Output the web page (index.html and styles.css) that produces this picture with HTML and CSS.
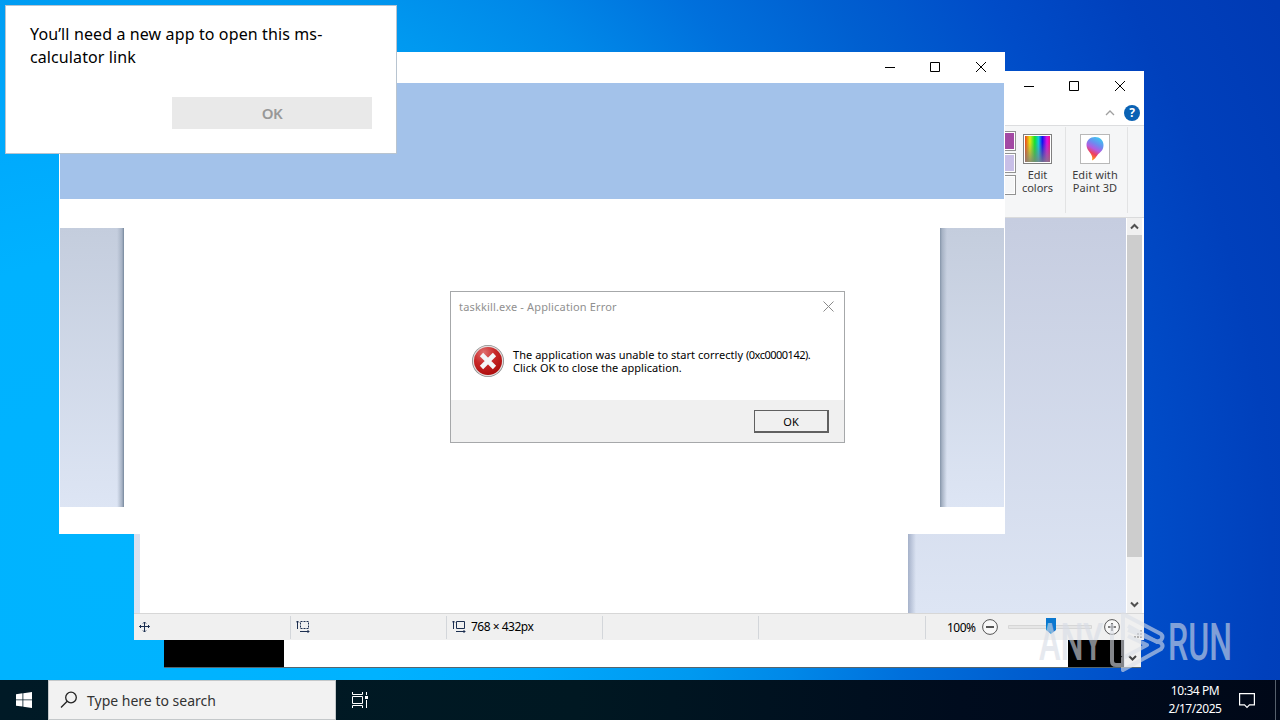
FILE: index.html
```
<!DOCTYPE html>
<html lang="en">
<head>
    <meta charset="UTF-8">
    <meta name="viewport" content="width=device-width, initial-scale=1.0">
    <title>Desktop</title>
    <link rel="stylesheet" href="styles.css">
</head>
<body>
    <div class="desktop">
        <!-- console -->
        <div class="window console">
            <div class="console-body">
                <div class="console-page"></div>
            </div>
            <div class="console-scroll">
                <svg width="9" height="7" viewBox="0 0 9 7"><path d="M1 1l3.5 3.5L8 1" fill="none" stroke="#444" stroke-width="2"/></svg>
            </div>
        </div>

        <!-- paint -->
        <div class="window paint">
            <div class="titlebar">
                <svg class="controls" width="104" height="12" viewBox="0 0 104 12" fill="none" stroke="#000">
                    <path d="M0 6.5h10M45.5 1.5h9v9h-9zM91 1l10 10M101 1L91 11"/>
                </svg>
            </div>
            <div class="tabs">
                <svg width="10" height="6" viewBox="0 0 10 6"><path d="M1 5l4-4 4 4" fill="none" stroke="#a0a0a0" stroke-width="1.3"/></svg>
                <span class="help">?</span>
            </div>
            <div class="ribbon">
                <div class="swatches">
                    <span class="swatch purple"></span>
                    <span class="swatch lavender"></span>
                    <span class="swatch"></span>
                </div>
                <div class="tool edit-colors">
                    <span class="spectrum"></span>
                    <span>Edit<br>colors</span>
                </div>
                <div class="tool paint3d">
                    <span class="paint3d-icon">
                        <svg width="20" height="26" viewBox="0 0 20 26">
                            <defs>
                                <linearGradient id="drop" x1="0.7" y1="0" x2="0.3" y2="1">
                                    <stop offset="0" stop-color="#3cc8f0"/>
                                    <stop offset="0.3" stop-color="#6b8df0"/>
                                    <stop offset="0.52" stop-color="#b45be0"/>
                                    <stop offset="0.72" stop-color="#f0405c"/>
                                    <stop offset="0.95" stop-color="#ff9a10"/>
                                </linearGradient>
                            </defs>
                            <path d="M10 1c5 0 8.500 3.500 8.500 8 0 6-4 7.500-6 10-1.500 2-3 4.500-5.500 5.500C8 21 6.500 18.500 4.500 16 3 14 1.500 12 1.500 9 1.500 4.500 5 1 10 1z" fill="url(#drop)"/>
                        </svg>
                    </span>
                    <span>Edit with<br>Paint 3D</span>
                </div>
            </div>
            <div class="workspace">
                <div class="gutter"></div>
                <div class="canvas"></div>
                <div class="backdrop"></div>
                <div class="scrollbar">
                    <span class="arrow"><svg width="9" height="7" viewBox="0 0 9 7"><path d="M1 5.500L4.500 2 8 5.500" fill="none" stroke="#505050" stroke-width="2"/></svg></span>
                    <span class="thumb"></span>
                    <span class="arrow down"><svg width="9" height="7" viewBox="0 0 9 7"><path d="M1 1.500L4.500 5 8 1.500" fill="none" stroke="#505050" stroke-width="2"/></svg></span>
                </div>
            </div>
            <div class="statusbar">
                <div class="cell">
                    <svg width="12" height="12" viewBox="0 0 12 12" fill="none" stroke="#1c2f50"><path d="M5.500 1v10M0.500 5.500h10M4 2.500L5.500 1 7 2.500M4 9.500L5.500 11 7 9.500M2 4L0.500 5.500 2 7M9 4l1.500 1.500L9 7"/></svg>
                </div>
                <div class="cell">
                    <svg width="14" height="13" viewBox="0 0 14 13" fill="none" stroke="#1c2f50"><path d="M1.500 9V1M0 2.500L1.500 1 3 2.500M4 11.500h9M11.500 10l1.500 1.500-1.500 1.500"/><path d="M4.500 1.500h8v7h-8z" stroke-dasharray="2 1"/></svg>
                </div>
                <div class="cell">
                    <svg width="14" height="13" viewBox="0 0 14 13" fill="none" stroke="#1c2f50"><path d="M1.500 9V1M0 2.500L1.500 1 3 2.500M4 11.500h9M11.500 10l1.500 1.500-1.500 1.500M4.500 1.500h8v7h-8z"/></svg>
                    <span class="size">768 × 432px</span>
                </div>
                <div class="cell"></div>
                <div class="cell wide"></div>
                <div class="zoom">
                    <span class="percent">100%</span>
                    <svg width="16" height="16" viewBox="0 0 16 16" fill="#f8f8f8" stroke="#555"><circle cx="8" cy="8" r="7.400"/><path d="M4 8h8" stroke-width="2"/></svg>
                    <svg class="slider" width="84" height="18" viewBox="0 0 84 18">
                        <path d="M0.500 7.500h83v3h-83z" fill="#e6e6e6" stroke="#d6d6d6"/>
                        <path d="M38 0h10v12l-5 4-5-4z" fill="#0a78d0"/>
                    </svg>
                    <svg width="16" height="16" viewBox="0 0 16 16" fill="#f8f8f8" stroke="#555"><circle cx="8" cy="8" r="7.400"/><path d="M4 8h8M8 4v8" stroke-width="1.600"/></svg>
                </div>
                <svg class="grip" width="8" height="8" viewBox="0 0 8 8" fill="#b0b0b0"><path d="M6 0h2v2H6zM3 3h2v2H3zM6 3h2v2H6zM0 6h2v2H0zM3 6h2v2H3zM6 6h2v2H6z"/></svg>
            </div>
        </div>

        <!-- half drawn window -->
        <div class="window front">
            <div class="titlebar">
                <svg class="controls" width="104" height="12" viewBox="0 0 104 12" fill="none" stroke="#000">
                    <path d="M0 6.500h10M45.500 1.500h9v9h-9zM91 1l10 10M101 1L91 11"/>
                </svg>
            </div>
            <div class="banner"></div>
            <div class="stage">
                <div class="side left"></div>
                <div class="side right"></div>
            </div>
        </div>

        <!-- error dialog -->
        <div class="window error">
            <div class="error-title">
                <span>taskkill.exe - Application Error</span>
                <svg width="11" height="11" viewBox="0 0 11 11"><path d="M0.500 0.500l10 10M10.500 0.500l-10 10" stroke="#8a8a8a"/></svg>
            </div>
            <div class="error-body">
                <svg width="34" height="34" viewBox="0 0 34 34">
                    <defs>
                        <radialGradient id="red" cx="0.35" cy="0.2" r="0.9">
                            <stop offset="0" stop-color="#e07070"/>
                            <stop offset="0.45" stop-color="#c82828"/>
                            <stop offset="1" stop-color="#a80808"/>
                        </radialGradient>
                    </defs>
                    <circle cx="17" cy="17" r="16" fill="#8c8c8c"/>
                    <circle cx="17" cy="17" r="15.200" fill="#e4dcdc"/>
                    <circle cx="17" cy="17" r="14" fill="url(#red)"/>
                    <path d="M10.500 10.500l13 13M23.500 10.500l-13 13" stroke="#f4f6f8" stroke-width="4.600"/>
                </svg>
                <p>The application was unable to start correctly <span class="code">(0xc0000142).</span><br>Click OK to close the application.</p>
            </div>
            <div class="error-footer">
                <button class="error-ok">OK</button>
            </div>
        </div>

        <!-- app picker -->
        <div class="window picker">
            <p>You’ll need a new app to open this ms-<br>calculator link</p>
            <button class="picker-ok">OK</button>
        </div>

        <svg class="watermark" width="220" height="70" viewBox="0 0 220 70">
            <g class="mark-text">
                <text x="3" y="52" textLength="64" lengthAdjust="spacingAndGlyphs">ANY</text>
                <text x="132" y="52" textLength="64" lengthAdjust="spacingAndGlyphs">RUN</text>
            </g>
            <g class="mark-play">
                <path d="M76 16v37q0 4 4 4h7"/>
                <path d="M87 48V6l38 20q3 3 0 6l-4 2L92 18"/>
                <path d="M92 22l33 13q3 3 0 6L87 62V50l24-13-19-9"/>
            </g>
        </svg>
    </div>

    <div class="taskbar">
        <div class="start">
            <svg width="16" height="16" viewBox="0 0 16 16" fill="#fff"><path d="M0 2.200l6.500-.9v6.200H0zM7.300 1.200L16 0v7.500H7.300zM0 8.300h6.500v6.200L0 13.700zM7.300 8.300H16V16l-8.700-1.200z"/></svg>
        </div>
        <div class="search">
            <svg width="18" height="18" viewBox="0 0 18 18" fill="none" stroke="#222" stroke-width="1.300"><circle cx="11" cy="6.500" r="5.300"/><path d="M7.200 10.200L1 16.500"/></svg>
            <span>Type here to search</span>
        </div>
        <div class="taskview">
            <svg width="17" height="16" viewBox="0 0 17 16" fill="none" stroke="#fff"><path d="M0.500 0v2.500h10V0M0.500 4.500h10v7h-10zM0.500 16v-2.500h10V16M14.500 0v3M14.500 8v8"/><path d="M13 4h3v3h-3z" fill="#fff" stroke="none"/></svg>
        </div>
        <div class="clock">
            <span class="time">10:34 PM</span>
            <span class="date">2/17/2025</span>
        </div>
        <div class="notify">
            <svg width="16" height="17" viewBox="0 0 16 17" fill="none" stroke="#fff" stroke-width="1.200"><path d="M0.600 1.600h14.800v11.200H10.500L8 15.300 5.500 12.800H0.600z"/></svg>
        </div>
    </div>
</body>
</html>
```
FILE: styles.css
```
* {
    box-sizing: border-box;
}
body {
    margin: 0;
    width: 1280px;
    height: 720px;
    overflow: hidden;
    display: flex;
    flex-direction: column;
    font-family: "Noto Sans", "Open Sans", sans-serif;
    color: #000;
}
p {
    margin: 0;
}
svg {
    display: block;
    flex: none;
}
button {
    font-family: inherit;
    padding: 0;
    border-radius: 0;
}
.desktop {
    position: relative;
    height: 680px;
    background: radial-gradient(circle at 100px 560px, #00b4ff 0, #00b2ff 300px, #00a8fc 450px, #0099f0 600px, #0088e8 700px, #0070dc 810px, #005fd0 920px, #004cc8 1050px, #0040bc 1170px, #003ab4 1300px);
}
.window {
    position: absolute;
    display: flex;
    background: #fff;
}
.titlebar {
    height: 31px;
    display: flex;
    justify-content: flex-end;
    align-items: center;
    flex: none;
    padding-bottom: 2px;
}
.controls {
    margin-right: 16px;
}

/* console */
.console {
    left: 164px;
    top: 600px;
    width: 977px;
    height: 68px;
    border-bottom: 1px solid #55656d;
}
.console-body {
    width: 960px;
    padding: 0 56px 0 120px;
    background: #000;
}
.console-page {
    height: 100%;
    background: #fff;
}
.console-scroll {
    width: 17px;
    background: #f0f0f0;
    display: flex;
    justify-content: center;
    align-items: flex-end;
    padding-bottom: 5px;
}

/* paint */
.paint {
    left: 134px;
    top: 71px;
    width: 1010px;
    height: 569px;
    flex-direction: column;
}
.tabs {
    height: 24px;
    display: flex;
    justify-content: flex-end;
    align-items: center;
    gap: 9px;
    padding: 0 4px 1px 0;
    border-bottom: 1px solid #dcdddf;
}
.help {
    width: 16px;
    height: 16px;
    border-radius: 50%;
    background: #0a62b4;
    color: #fff;
    font-size: 12px;
    font-weight: bold;
    line-height: 16px;
    text-align: center;
}
.ribbon {
    height: 92px;
    display: flex;
    justify-content: flex-end;
    padding: 1px 16px 4px 0;
    background: #f5f6f7;
    border-bottom: 1px solid #dadbdc;
}
.swatches {
    display: flex;
    flex-direction: column;
    gap: 2px;
    padding-top: 4px;
}
.swatch {
    width: 20px;
    height: 20px;
    border: 1px solid #929292;
    box-shadow: inset 0 0 0 1px #fff;
    background: #f5f6f7;
}
.purple {
    background: #a349a4;
}
.lavender {
    background: #c8bfe7;
}
.tool {
    display: flex;
    flex-direction: column;
    align-items: center;
    font-size: 11px;
    line-height: 13px;
    text-align: center;
    color: #3c3c3c;
    border-right: 1px solid #e2e3e4;
    white-space: nowrap;
}
.edit-colors {
    width: 50px;
    padding-right: 6px;
}
.paint3d {
    width: 62px;
    padding-right: 3px;
    letter-spacing: 0.1px;
}
.spectrum {
    width: 29px;
    height: 30px;
    margin: 7px 0 4px;
    border: 1px solid #808080;
    box-shadow: inset 0 0 0 1px #fff;
    background: linear-gradient(to bottom, rgba(128, 128, 128, 0) 25%, rgba(128, 128, 128, 0.85)), linear-gradient(to right, #e82020, #e8e810 22%, #10e030 40%, #10c8e0 54%, #1010f0 68%, #e010e0 85%, #f01060);
}
.paint3d-icon {
    width: 30px;
    height: 30px;
    margin: 7px 0 4px;
    border: 1px solid #b8b8b8;
    background: #fff;
    display: flex;
    justify-content: center;
    align-items: center;
}
.workspace {
    height: 396px;
    display: flex;
    background: linear-gradient(#c6cde0, #dde5f4);
}
.gutter {
    width: 6px;
}
.canvas {
    width: 768px;
    background: #fff;
}
.backdrop {
    flex: 1;
    background: linear-gradient(to right, rgba(130, 145, 175, 0.6), rgba(130, 145, 175, 0) 8px);
}
.scrollbar {
    width: 18px;
    display: flex;
    flex-direction: column;
    background: #f0f0f0;
    border: solid #fff;
    border-width: 0 2px 0 1px;
}
.arrow {
    height: 17px;
    display: flex;
    justify-content: center;
    align-items: center;
}
.thumb {
    height: 322px;
    background: #cdcdcd;
}
.down {
    margin-top: auto;
}
.statusbar {
    height: 27px;
    display: flex;
    background: #f0f0f0;
    border-top: 1px solid #d7d7d7;
}
.cell {
    width: 156px;
    margin: 2px 0 1px;
    padding: 0 0 2px 5px;
    display: flex;
    align-items: center;
    gap: 5px;
    border-right: 1px solid #d3d6da;
}
.cell:first-child {
    width: 157px;
}
.wide {
    width: 167px;
}
.size,
.percent {
    font-size: 12px;
    letter-spacing: -0.5px;
}
.zoom {
    display: flex;
    align-items: center;
    padding-left: 21px;
}
.percent {
    width: 35px;
}
.slider {
    margin: 0 12px 0 10px;
}
.grip {
    align-self: flex-end;
    margin: 0 2px 2px auto;
}

/* front */
.front {
    left: 59px;
    top: 52px;
    width: 946px;
    height: 482px;
    flex-direction: column;
    padding: 0 1px;
}
.front .controls {
    margin-right: 15px;
}
.banner {
    height: 116px;
    background: #a3c2ea;
}
.stage {
    height: 279px;
    margin-top: 29px;
    display: flex;
    justify-content: space-between;
}
.side {
    width: 64px;
}
.left {
    background: linear-gradient(to left, #76879c 0, #a6b2c4 2px, rgba(166, 178, 196, 0) 7px), linear-gradient(#c4cddd, #dde5f4);
}
.right {
    background: linear-gradient(to right, #8494a8 0, #a6b2c4 2px, rgba(166, 178, 196, 0) 7px), linear-gradient(#c4cddd, #dde5f4);
}

/* error dialog */
.error {
    left: 450px;
    top: 291px;
    width: 395px;
    height: 152px;
    flex-direction: column;
    border: 1px solid #a6a8aa;
    font-size: 11px;
}
.error-title {
    height: 30px;
    display: flex;
    justify-content: space-between;
    align-items: center;
    padding: 0 10px 2px 8px;
    color: #909090;
    letter-spacing: 0.16px;
}
.error-body {
    height: 78px;
    display: flex;
    align-items: center;
    padding-left: 20px;
    gap: 8px;
    line-height: 13px;
    letter-spacing: 0.04px;
    white-space: nowrap;
}
.code {
    letter-spacing: -0.5px;
}
.error-footer {
    flex: 1;
    display: flex;
    justify-content: flex-end;
    align-items: center;
    padding: 1px 15px 0 0;
    background: #f0f0f0;
}
.error-ok {
    width: 75px;
    height: 23px;
    border: 1px solid #606060;
    border-width: 1px 2px 2px 1px;
    background: #f0f0f0;
    font-size: 11px;
}

/* app picker */
.picker {
    left: 5px;
    top: 5px;
    width: 392px;
    height: 149px;
    flex-direction: column;
    padding: 17px 24px 24px;
    border: 1px solid #b8c4d0;
    font-size: 16px;
    line-height: 23px;
    letter-spacing: 0.1px;
    white-space: nowrap;
}
.picker p::first-line {
    letter-spacing: 0.12px;
}
.picker-ok {
    width: 200px;
    height: 32px;
    margin: auto 0 0 auto;
    border: none;
    background: #e9e9e9;
    color: #989898;
    font-size: 15px;
    font-weight: 600;
    letter-spacing: -0.5px;
}

.watermark {
    position: absolute;
    left: 1036px;
    top: 608px;
}
.mark-text {
    font-family: Roboto, sans-serif;
    font-size: 52px;
    font-weight: 500;
    fill: #d6dce6;
    opacity: 0.6;
}
.mark-play path {
    fill: none;
    stroke: #dce0e8;
    stroke-width: 4;
    stroke-linejoin: round;
}
.mark-play {
    opacity: 0.6;
}

/* taskbar */
.taskbar {
    height: 40px;
    display: flex;
    background: linear-gradient(to right, #001a26, #001822 45%, #000c1e 75%, #000818);
    color: #fff;
}
.start {
    width: 48px;
    display: flex;
    justify-content: center;
    align-items: center;
}
.search {
    width: 288px;
    display: flex;
    align-items: center;
    gap: 9px;
    padding-left: 11px;
    background: #f2f2f2;
    border: 1px solid #c4c8ca;
    color: #333;
    font-size: 14px;
}
.taskview {
    display: flex;
    align-items: center;
    padding-left: 16px;
}
.clock {
    margin-left: auto;
    width: 64px;
    display: flex;
    flex-direction: column;
    align-items: center;
    padding-top: 2px;
    font-size: 12px;
    line-height: 18px;
    letter-spacing: -0.45px;
    white-space: nowrap;
}
.notify {
    width: 49px;
    display: flex;
    align-items: center;
    padding-left: 12px;
    border-right: 1px solid #56606c;
    margin-right: 4px;
}
```
